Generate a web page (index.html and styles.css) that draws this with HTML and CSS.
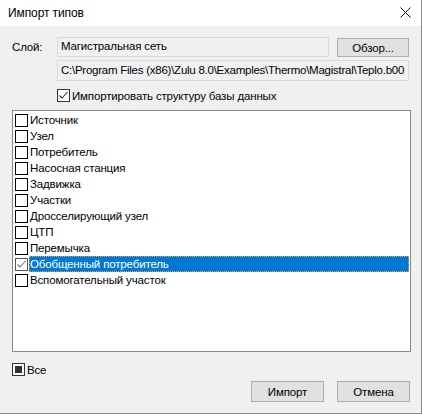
FILE: index.html
```html
<!DOCTYPE html>
<html lang="ru">
<head>
<meta charset="utf-8">
<title>Импорт типов</title>
<link rel="stylesheet" href="styles.css">
</head>
<body>
<div class="window">
  <div class="titlebar">
    <span class="title">Импорт типов</span>
    <svg class="close" width="11" height="11" viewBox="0 0 11 11"><path d="M0.5 0.5 L10.5 10.5 M10.5 0.5 L0.5 10.5" stroke="#111" stroke-width="1" fill="none"/></svg>
  </div>
  <div class="body">
    <div class="layer-row">
      <span class="label">Слой:</span>
      <div class="field name">Магистральная сеть</div>
      <button class="btn browse">Обзор...</button>
    </div>
    <div class="field path">C:\Program Files (x86)\Zulu 8.0\Examples\Thermo\Magistral\Teplo.b00</div>
    <label class="check-row">
      <span class="cb themed"><svg width="11" height="11" viewBox="0 0 11 11"><path d="M1.5 5.5 L4 8 L9.5 2" stroke="#333" stroke-width="1.1" fill="none"/></svg></span>
      <span>Импортировать структуру базы данных</span>
    </label>
    <div class="list">
      <div class="item"><span class="cb"></span><span class="txt">Источник</span></div>
      <div class="item"><span class="cb"></span><span class="txt">Узел</span></div>
      <div class="item"><span class="cb"></span><span class="txt">Потребитель</span></div>
      <div class="item"><span class="cb"></span><span class="txt">Насосная станция</span></div>
      <div class="item"><span class="cb"></span><span class="txt">Задвижка</span></div>
      <div class="item"><span class="cb"></span><span class="txt">Участки</span></div>
      <div class="item"><span class="cb"></span><span class="txt">Дросселирующий узел</span></div>
      <div class="item"><span class="cb"></span><span class="txt">ЦТП</span></div>
      <div class="item"><span class="cb"></span><span class="txt">Перемычка</span></div>
      <div class="item selected"><span class="cb gray"><svg width="11" height="11" viewBox="0 0 11 11"><path d="M1.5 5.5 L4 8 L9.5 2" stroke="#777" stroke-width="1.1" fill="none"/></svg></span><span class="txt">Обобщенный потребитель</span></div>
      <div class="item"><span class="cb"></span><span class="txt">Вспомогательный участок</span></div>
    </div>
    <label class="check-row all">
      <span class="cb themed"><span class="fill"></span></span>
      <span>Все</span>
    </label>
    <div class="buttons">
      <button class="btn">Импорт</button>
      <button class="btn">Отмена</button>
    </div>
  </div>
</div>
</body>
</html>
```
FILE: styles.css
```css
* { box-sizing: border-box; }
html, body { margin: 0; padding: 0; }
body {
  font-family: "Liberation Sans", Arial, sans-serif;
  font-size: 11.5px;
  letter-spacing: -0.15px;
  color: #000;
  background: #f0f0f0;
}
.window {
  width: 422px;
  height: 414px;
  display: flex;
  flex-direction: column;
  border-right: 1px solid #8c8c8c;
  border-bottom: 1px solid #8c8c8c;
  background: #f0f0f0;
}
.titlebar {
  height: 26px;
  background: #fff;
  display: flex;
  align-items: center;
  justify-content: space-between;
  padding: 0 10px 1px 8px;
}
.title { font-size: 12px; letter-spacing: -0.1px; }
.close { display: block; }
.body {
  flex: 1;
  padding: 11px 10px 0 12px;
  display: flex;
  flex-direction: column;
}
.layer-row {
  display: flex;
  align-items: flex-start;
  height: 20px;
}
.label {
  width: 45px;
  line-height: 18px;
  padding-top: 1px;
}
.field {
  background: #f0f0f0;
  border: 1px solid #d9d9d9;
  padding: 0 3px;
  line-height: 17px;
  white-space: nowrap;
  overflow: hidden;
}
.field.name {
  width: 272px;
  height: 20px;
}
.btn {
  font-family: inherit;
  font-size: 11.5px;
  letter-spacing: -0.15px;
  color: #000;
  background: #e1e1e1;
  border: 1px solid #adadad;
  padding: 0;
  width: 73px;
  height: 21px;
  margin: 0;
}
.btn.browse {
  margin-left: 8px;
  margin-top: 1px;
  height: 19px;
  width: 72px;
}
.field.path {
  margin-top: 3px;
  margin-left: 45px;
  width: 352px;
  height: 21px;
  line-height: 19px;
  letter-spacing: -0.25px;
}
.check-row {
  display: flex;
  align-items: center;
  gap: 2px;
  margin-top: 7px;
  margin-left: 45px;
  height: 15px;
}
.cb {
  width: 13px;
  height: 13px;
  border: 1px solid #000;
  background: #fff;
  display: flex;
  align-items: center;
  justify-content: center;
  flex: none;
}
.cb.themed { border-color: #333; }
.cb.gray { border-color: #555; }
.cb svg { display: block; }
.list {
  margin-top: 7px;
  width: 399px;
  height: 242px;
  border: 1px solid #828790;
  background: #fff;
  padding: 1px 1px 0 2px;
}
.item {
  display: flex;
  align-items: center;
  height: 16px;
  gap: 1px;
}
.item .txt {
  line-height: 16px;
  padding: 0 1px;
}
.item.selected .txt {
  flex: 1;
  background: #0078d7;
  color: #fff;
  outline: 1px dotted #f0a030;
  outline-offset: -1px;
}
.check-row.all {
  margin-left: 0;
  margin-top: 10px;
}
.fill {
  width: 7px;
  height: 7px;
  background: #333;
}
.buttons {
  display: flex;
  justify-content: flex-end;
  gap: 13px;
  margin-top: 4px;
  padding-right: 1px;
}
```
